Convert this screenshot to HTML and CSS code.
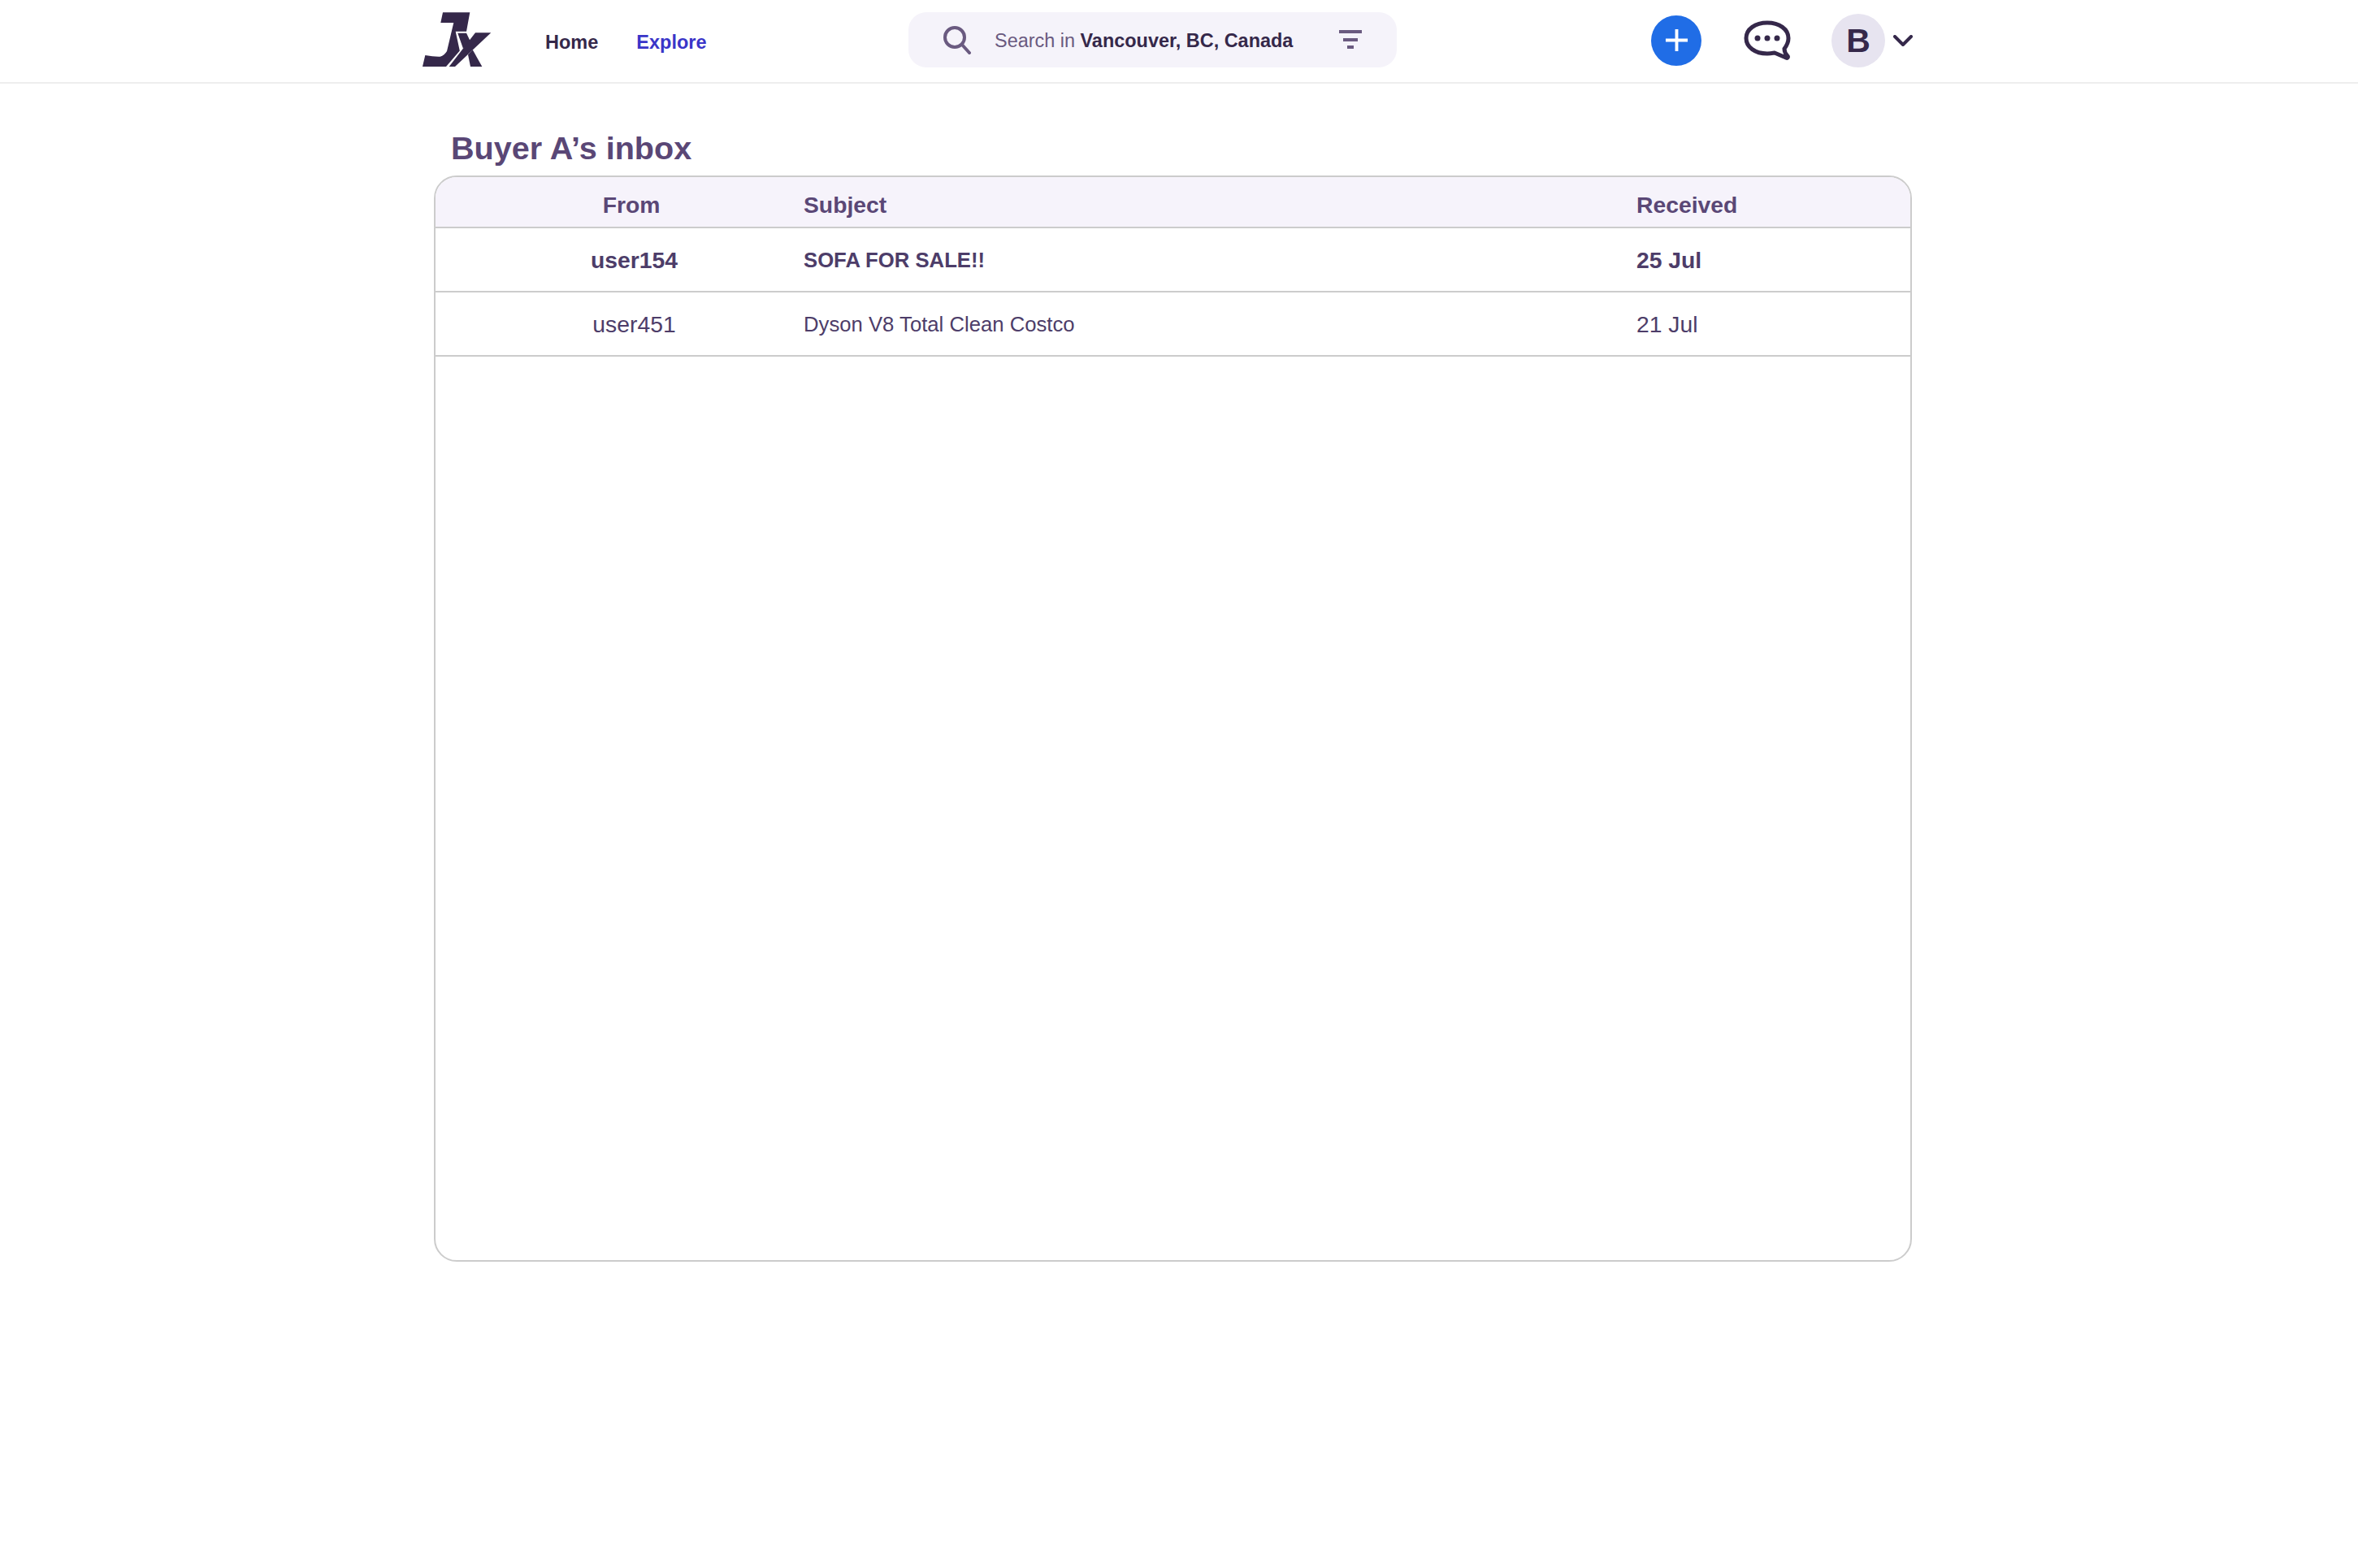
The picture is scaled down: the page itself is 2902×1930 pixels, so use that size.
FILE: index.html
```html
<!DOCTYPE html>
<html lang="en">
  <head>
    <meta charset="UTF-8" />
    <title>Inbox</title>
    <link rel="stylesheet" href="styles.css">
  </head>
  <body>
    <header class="topbar">
      <svg class="logo" viewBox="0 0 84 68" aria-label="logo">
        <path class="logo-mark" d="M25 .3H58.300L54 23.700H40.700L45.800 47.500L29 67H0L3.300 53Q14 55 21.700 54.700Q27 53 30 48L38.300 13H22.300Z" />
        <path class="logo-mark" d="M43.300 25.700H54L59 36.300L50 44.700Z" />
        <path class="logo-mark" d="M65 25.300H84.300L40 67H32.700Z" />
        <path class="logo-mark" d="M56 52.300L61.700 46.300L73.300 67H59Z" />
      </svg>
      <nav class="nav">
        <a class="nav-link" href="#">Home</a>
        <a class="nav-link active" href="#">Explore</a>
      </nav>
      <div class="search">
        <svg class="search-icon" viewBox="0 0 36 36">
          <circle cx="15" cy="15" r="12" />
          <path d="M24 24L33 34" />
        </svg>
        <span class="search-text">Search in <b>Vancouver, BC, Canada</b></span>
        <svg class="filter-icon" viewBox="0 0 28 24">
          <path d="M0 2H28M5 12H23M10 21H18" />
        </svg>
      </div>
      <div class="actions">
        <button class="add-btn">
          <svg viewBox="0 0 30 30"><path d="M15 1V29M1 15H29" /></svg>
        </button>
        <svg class="chat-icon" viewBox="0 0 58 50">
          <path class="chat-line" d="M29 3C14 3 3 11 3 22C3 33 14 41 29 41C32 41 35 40.500 38 40L52 46C54 47 55 45.500 54 44C51 41 50 38 50 35C53 31 55 27 55 22C55 11 44 3 29 3Z" />
          <circle cx="17" cy="22" r="3.500" />
          <circle cx="29" cy="22" r="3.500" />
          <circle cx="41" cy="22" r="3.500" />
        </svg>
        <div class="avatar">B</div>
        <svg class="chevron" viewBox="0 0 24 14"><path d="M2 2L12 12L22 2" /></svg>
      </div>
    </header>

    <main class="content">
      <h1 class="title">Buyer A’s inbox</h1>
      <div class="inbox">
        <div class="row head">
          <div class="from">From</div>
          <div>Subject</div>
          <div>Received</div>
        </div>
        <div class="row unread">
          <div class="from">user154</div>
          <div class="subject">SOFA FOR SALE!!</div>
          <div>25 Jul</div>
        </div>
        <div class="row">
          <div class="from">user451</div>
          <div class="subject">Dyson V8 Total Clean Costco</div>
          <div>21 Jul</div>
        </div>
      </div>
    </main>
  </body>
</html>
```

FILE: styles.css
```css
body {
  margin: 0;
  background: #fff;
  font-family: "Liberation Sans", Arial, sans-serif;
  color: #35284a;
}
.topbar {
  display: flex;
  align-items: center;
  height: 101px;
  padding-left: 520px;
  border-bottom: 2px solid #eeeeee;
}
.logo {
  flex: none;
  width: 84px;
  height: 68px;
  margin-top: -3px;
}
.logo-mark {
  fill: #35284a;
}
.nav {
  display: flex;
  flex: none;
  gap: 47px;
  margin-left: 67px;
  margin-top: 3px;
  width: 447px;
}
.nav-link {
  font-size: 23.500px;
  font-weight: bold;
  color: #35284a;
  text-decoration: none;
}
.nav-link.active {
  color: #3a35c8;
}
.search {
  display: flex;
  flex: none;
  align-items: center;
  width: 601px;
  height: 68px;
  margin-top: -3px;
  padding-left: 42px;
  box-sizing: border-box;
  background: #f5f3fa;
  border-radius: 22px;
}
.search-icon {
  flex: none;
  width: 36px;
  height: 36px;
  fill: none;
  stroke: #6a5a80;
  stroke-width: 4;
  stroke-linecap: round;
}
.search-text {
  flex: none;
  margin-left: 28px;
  margin-top: 2px;
  width: 424px;
  font-size: 23.450px;
  color: #6a5a80;
  white-space: nowrap;
}
.search-text b {
  color: #35284a;
}
.filter-icon {
  flex: none;
  width: 28px;
  height: 24px;
  fill: none;
  stroke: #6a5a80;
  stroke-width: 4;
}
.actions {
  display: flex;
  flex: none;
  align-items: center;
  margin-left: 313px;
  margin-top: -2px;
}
.add-btn {
  display: flex;
  align-items: center;
  justify-content: center;
  width: 62px;
  height: 62px;
  padding: 0;
  border: 0;
  border-radius: 50%;
  background: #206de6;
}
.add-btn svg {
  width: 29px;
  height: 29px;
  fill: none;
  stroke: #fff;
  stroke-width: 4;
}
.chat-icon {
  width: 58px;
  height: 50px;
  margin-left: 52px;
  fill: #35284a;
}
.chat-line {
  fill: none;
  stroke: #35284a;
  stroke-width: 5;
}
.avatar {
  width: 66px;
  height: 66px;
  margin-left: 50px;
  border-radius: 50%;
  background: #e7e4f0;
  font-size: 41px;
  font-weight: bold;
  line-height: 66px;
  text-align: center;
}
.chevron {
  width: 24px;
  height: 14px;
  margin-left: 10px;
  fill: none;
  stroke: #35284a;
  stroke-width: 4;
  stroke-linecap: round;
  stroke-linejoin: round;
}
.content {
  padding-left: 534px;
}
.title {
  margin: 0;
  padding: 52px 0 7px 21px;
  font-size: 39.600px;
  line-height: 54px;
  font-weight: bold;
  color: #5a4776;
}
.inbox {
  width: 1819px;
  height: 1337px;
  box-sizing: border-box;
  border: 2px solid #cccccc;
  border-radius: 28px;
  overflow: hidden;
}
.row {
  display: grid;
  grid-template-columns: 453px 1025px 1fr;
  align-items: center;
  box-sizing: content-box;
  height: 75px;
  padding-top: 2px;
  border-bottom: 2px solid #cccccc;
  font-size: 28.300px;
  color: #4d3d69;
}
.row.head {
  height: 54px;
  padding-top: 7px;
  background: #f6f3fb;
  font-weight: bold;
  color: #5a4776;
}
.row.unread {
  font-weight: bold;
}
.from {
  padding-left: 36px;
  text-align: center;
}
.head .from {
  padding-left: 29px;
}
.subject {
  font-size: 25.700px;
}
```
